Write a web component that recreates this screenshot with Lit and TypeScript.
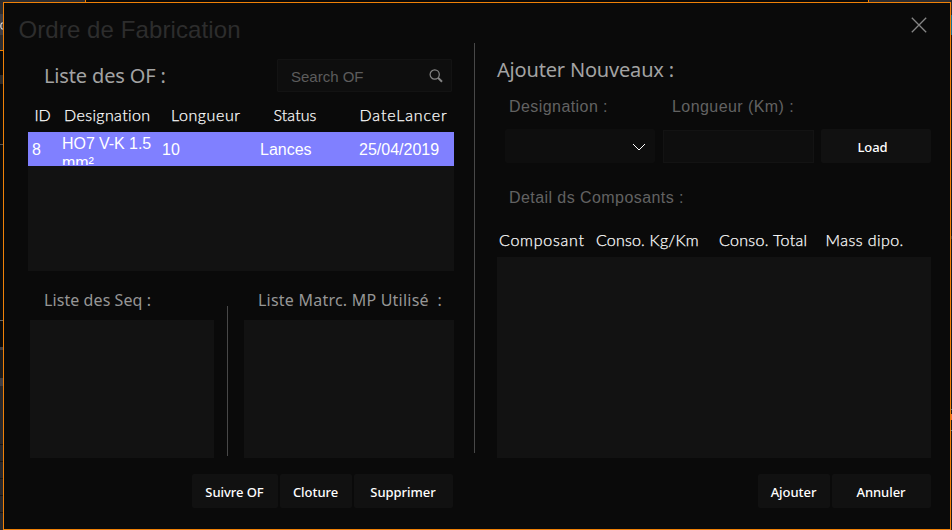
import { LitElement, html, css } from "lit";
import { customElement } from "lit/decorators.js";
import { styleMap } from "lit/directives/style-map.js";

interface Label {
  text: string;
  track: number;
}

const label = (text: string, track: number): Label => ({ text, track });

const orderColumns = [
  label("ID", -0.2),
  label("Designation", 0.4),
  label("Longueur", 0.6),
  label("Status", 0.1),
  label("DateLancer", 0.9),
];

const partColumns = [
  label("Composant", 0.75),
  label("Conso. Kg/Km", 0.2),
  label("Conso. Total", 0.32),
  label("Mass dipo.", 0.45),
];

const orders = [["8", "HO7 V-K 1.5 mm²", "10", "Lances", "25/04/2019"]];

@customElement("app-root")
export class AppRoot extends LitElement {
  static styles = css`
    :host {
      display: block;
      box-sizing: border-box;
      width: 952px;
      height: 530px;
      padding: 2px 1px 0 3px;
      overflow: hidden;
      position: relative;
      background: #0a0a0a;
      font-family: "Liberation Sans", Arial, sans-serif;
      color: #fff;
    }
    * {
      box-sizing: border-box;
    }
    .owner-top,
    .owner-left,
    .owner-right {
      position: absolute;
      top: 0;
      left: 0;
    }
    .owner-top {
      width: 952px;
      height: 2px;
      background: linear-gradient(
        to right,
        #2d2d30 85px,
        #f08000 85px 86px,
        #0a0a0a 86px 868px,
        #f08000 868px 869px,
        #2d2d30 869px
      );
    }
    .owner-left {
      width: 3px;
      height: 530px;
      background: linear-gradient(
        #2d2d30 14px,
        #3f3f46 14px 35px,
        #2d2d30 35px 50px,
        #f08000 50px 51px,
        #0a0a0a 51px 75px,
        #2a2a2a 75px 84px,
        #0a0a0a 84px 144px,
        #555 144px 145px,
        #0a0a0a 145px 320px,
        #666 320px 321px,
        #0a0a0a 321px 347px,
        #3f3f46 347px 350px,
        #1b1b1c 350px 378px,
        #3f3f46 378px 386px,
        #28282c 386px 444px,
        #151517 444px 445px,
        #28282c 445px 461px,
        #151517 461px 462px,
        #28282c 462px 478px,
        #151517 478px 479px,
        #28282c 479px 495px,
        #151517 495px 496px,
        #28282c 496px 512px,
        #151517 512px 513px,
        #28282c 513px
      );
    }
    .owner-right {
      left: 951px;
      width: 1px;
      height: 530px;
      background: linear-gradient(
        #2d2d30 15px,
        #17708f 15px 35px,
        #1c1c1c 35px 236px,
        #3a3a3a 236px 239px,
        #1c1c1c 239px 409px,
        #58808a 409px 410px,
        #1c1c1c 410px 414px,
        #f0703c 414px 420px,
        #1c1c1c 420px 430px,
        #58808a 430px 431px,
        #1c1c1c 431px
      );
    }
    .edge-glyph {
      position: absolute;
      left: 0;
      top: 22px;
      width: 3px;
      height: 8px;
    }
    .window {
      position: relative;
      width: 948px;
      height: 528px;
      border: 1px solid #ef8108;
      background: #0a0a0a;
    }
    .titlebar {
      height: 40px;
      padding: 13px 23px 0 14.5px;
      display: flex;
      justify-content: space-between;
      align-items: flex-start;
    }
    .title {
      font-size: 24px;
      line-height: 27px;
      letter-spacing: 0.1px;
      color: #2d2d2d;
    }
    .close {
      display: block;
      margin-top: 1px;
      width: 16px;
      height: 16px;
    }
    .body {
      display: flex;
      align-items: flex-start;
    }
    .orders {
      width: 470px;
      padding: 16px 20px 0 24px;
    }
    .split {
      width: 1px;
      height: 410px;
      background: #484848;
    }
    .create {
      width: 475px;
      padding: 6px 19px 0 22px;
    }
    .heading {
      font: 20px "Noto Sans", sans-serif;
      color: #a3a3a3;
    }
    .search-row {
      display: flex;
      justify-content: space-between;
      height: 33px;
      padding: 0 2px 0 16px;
    }
    .search-row .heading {
      line-height: 34px;
      letter-spacing: -0.15px;
    }
    .search {
      width: 175px;
      height: 33px;
      border: 1px solid #131313;
      border-radius: 1px;
      background: #0e0e0e;
      display: flex;
      justify-content: space-between;
      padding: 0 8px 0 13px;
      font-size: 15px;
      line-height: 33px;
      color: #5c5c5c;
    }
    .search svg {
      width: 14px;
      height: 14px;
      margin-top: 9px;
    }
    .columns {
      display: grid;
      font: 300 16px "Lato", sans-serif;
      -webkit-text-stroke: 0.25px #fff;
      line-height: 34px;
      white-space: nowrap;
    }
    .order-columns {
      height: 40px;
      padding: 6px 0 0 6.5px;
      grid-template-columns: 29.5px 107px 102.5px 86px 1fr;
    }
    .part-columns {
      height: 41px;
      padding: 7px 0 0 2px;
      grid-template-columns: 97px 123px 106.5px 1fr;
    }
    .panel {
      background: #121212;
    }
    .order-list {
      height: 139px;
    }
    .order {
      height: 34px;
      padding-left: 4px;
      display: grid;
      grid-template-columns: 30px 100px 98px 99px 1fr;
      background: #8080ff;
      font-size: 16px;
      line-height: 35px;
      overflow: hidden;
    }
    .order .wrap {
      height: 33px;
      padding-top: 2px;
      line-height: 19px;
      letter-spacing: -0.06px;
      overflow: hidden;
    }
    .lists {
      display: flex;
      height: 187px;
      padding-left: 2px;
    }
    .list {
      padding-top: 9px;
    }
    .list .panel {
      height: 138px;
    }
    .list-label {
      font: 16px "Noto Sans", sans-serif;
      line-height: 40px;
      color: #969696;
      white-space: pre;
      padding-left: 14px;
    }
    .sequences {
      width: 184px;
      letter-spacing: 0.08px;
    }
    .materials {
      width: 210px;
      letter-spacing: 0.22px;
    }
    .list-split {
      width: 1px;
      height: 150px;
      margin: 35px 16px 0 13px;
      background: #484848;
    }
    .actions {
      display: flex;
      justify-content: flex-end;
      gap: 2px;
      margin-top: 16px;
    }
    .orders .actions {
      padding-right: 1px;
    }
    button {
      height: 34px;
      padding: 2px 1px 0 0;
      border: 0;
      border-radius: 2px;
      background: #111;
      color: #fff;
      font: 500 13px "Noto Sans", sans-serif;
      line-height: 32px;
      letter-spacing: -0.05px;
    }
    .w72 {
      width: 72px;
    }
    .w86 {
      width: 86px;
    }
    .w99 {
      width: 99px;
    }
    .w110 {
      width: 110px;
      padding-right: 7px;
    }
    .create .heading {
      line-height: 42px;
      height: 40px;
      letter-spacing: -0.18px;
    }
    .field-label {
      font-size: 16px;
      letter-spacing: 0.43px;
      line-height: 36px;
      color: #626262;
      padding-left: 12px;
    }
    .field-labels {
      display: grid;
      grid-template-columns: 163px 1fr;
      height: 40px;
    }
    .fields {
      display: flex;
      height: 34px;
      padding-left: 8px;
    }
    .combo {
      width: 150px;
      border-radius: 2px;
      background: #0e0e0e;
      display: flex;
      justify-content: flex-end;
      padding: 14px 9px 0 0;
    }
    .combo svg {
      width: 14px;
      height: 8px;
    }
    .input {
      width: 151px;
      height: 33px;
      margin: 1px 7px 0 8px;
      border: 1px solid #131313;
      background: #0e0e0e;
    }
    .detail {
      margin-top: 16px;
      line-height: 37px;
    }
    .parts {
      height: 201px;
    }
  `;

  private header(columns: Label[], kind: string) {
    return html`<div class="columns ${kind}">
      ${columns.map(
        (c) => html`<span style=${styleMap({ letterSpacing: `${c.track}px` })}>${c.text}</span>`,
      )}
    </div>`;
  }

  render() {
    return html`
      <div class="owner-top"></div>
      <div class="owner-left"></div>
      <div class="owner-right"></div>
      <svg class="edge-glyph" viewBox="0 0 3 8">
        <path d="M3 1H2Q.8 1.500 .8 4T2 7H3" fill="none" stroke="#ddd" stroke-width="1.200" />
      </svg>
      <div class="window">
        <div class="titlebar">
          <div class="title">Ordre de Fabrication</div>
          <svg class="close" viewBox="0 0 16 16">
            <path d="M.8.8 15.200 15.200M15.200.8.8 15.200" stroke="#868686" stroke-width="1.300" />
          </svg>
        </div>
        <div class="body">
          <div class="orders">
            <div class="search-row">
              <div class="heading">Liste des OF :</div>
              <div class="search">
                <span>Search OF</span>
                <svg viewBox="0 0 14 14" fill="none" stroke="#858585">
                  <circle cx="5.700" cy="5.500" r="4.600" stroke-width="1.200" />
                  <path d="M9 8.800 13 12.700" stroke-width="1.900" />
                </svg>
              </div>
            </div>
            ${this.header(orderColumns, "order-columns")}
            <div class="panel order-list">
              ${orders.map(
                (row) => html`<div class="order">
                  ${row.map((cell, i) => html`<span class=${i === 1 ? "wrap" : ""}>${cell}</span>`)}
                </div>`,
              )}
            </div>
            <div class="lists">
              <div class="list sequences">
                <div class="list-label">Liste des Seq :</div>
                <div class="panel"></div>
              </div>
              <div class="list-split"></div>
              <div class="list materials">
                <div class="list-label">Liste Matrc. MP Utilisé  :</div>
                <div class="panel"></div>
              </div>
            </div>
            <div class="actions">
              <button class="w86">Suivre OF</button>
              <button class="w72">Cloture</button>
              <button class="w99">Supprimer</button>
            </div>
          </div>
          <div class="split"></div>
          <div class="create">
            <div class="heading">Ajouter Nouveaux :</div>
            <div class="field-labels">
              <div class="field-label">Designation :</div>
              <div class="field-label">Longueur (Km) :</div>
            </div>
            <div class="fields">
              <div class="combo">
                <svg viewBox="0 0 14 8">
                  <path d="M1 1 7 7 13 1" fill="none" stroke="#fff" stroke-width="1" />
                </svg>
              </div>
              <div class="input"></div>
              <button class="w110">Load</button>
            </div>
            <div class="field-label detail">Detail ds Composants :</div>
            ${this.header(partColumns, "part-columns")}
            <div class="panel parts"></div>
            <div class="actions">
              <button class="w72">Ajouter</button>
              <button class="w99">Annuler</button>
            </div>
          </div>
        </div>
      </div>
    `;
  }
}
